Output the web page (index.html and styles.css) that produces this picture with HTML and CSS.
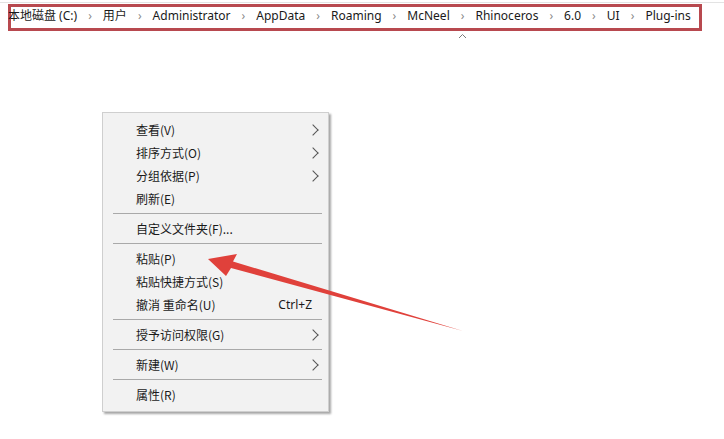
FILE: index.html
```html
<!DOCTYPE html>
<html lang="zh-CN">
<head>
    <meta charset="UTF-8">
    <title>Plug-ins</title>
    <link rel="stylesheet" href="styles.css">
</head>
<body>
<div class="window">
    <div class="address-bar">
        <div class="crumbs">
            <span class="crumb first">本地磁盘 (C:)</span><span class="sep">›</span>
            <span class="crumb">用户</span><span class="sep">›</span>
            <span class="crumb">Administrator</span><span class="sep">›</span>
            <span class="crumb">AppData</span><span class="sep">›</span>
            <span class="crumb">Roaming</span><span class="sep">›</span>
            <span class="crumb">McNeel</span><span class="sep">›</span>
            <span class="crumb">Rhinoceros</span><span class="sep">›</span>
            <span class="crumb">6.0</span><span class="sep">›</span>
            <span class="crumb">UI</span><span class="sep">›</span>
            <span class="crumb">Plug-ins</span>
        </div>
    </div>
    <div class="sort-caret">
        <svg width="9" height="6" viewBox="0 0 9 6"><path d="M1 5 L4.5 1.5 L8 5" fill="none" stroke="#7a7a7a" stroke-width="1"/></svg>
    </div>

    <ul class="context-menu">
        <li class="item has-sub">查看(V)</li>
        <li class="item has-sub">排序方式(O)</li>
        <li class="item has-sub">分组依据(P)</li>
        <li class="item">刷新(E)</li>
        <li class="divider"></li>
        <li class="item">自定义文件夹(F)...</li>
        <li class="divider"></li>
        <li class="item">粘贴(P)</li>
        <li class="item">粘贴快捷方式(S)</li>
        <li class="item">撤消 重命名(U)<span class="shortcut">Ctrl+Z</span></li>
        <li class="divider"></li>
        <li class="item has-sub">授予访问权限(G)</li>
        <li class="divider"></li>
        <li class="item has-sub">新建(W)</li>
        <li class="divider"></li>
        <li class="item">属性(R)</li>
    </ul>

    <svg class="pointer" width="724" height="439" viewBox="0 0 724 439">
        <polygon fill="#e0413b" points="208,259 237,254 233,261.5 463,331 231,268 226,276"/>
    </svg>
</div>
</body>
</html>
```

FILE: styles.css
```css
body {
    margin: 0;
    background: #fff;
    font-family: "Noto Sans", "Noto Sans CJK SC", sans-serif;
    font-size: 12px;
    color: #1a1a1a;
}
.window {
    position: relative;
    width: 724px;
    height: 439px;
    overflow: hidden;
}
.address-bar {
    border-top: 1px solid #e3e3e3;
    margin-top: 2px;
    padding-top: 1px;
}
.crumbs {
    display: flex;
    align-items: flex-start;
    width: 688px;
    height: 17px;
    margin-left: 8px;
    padding-bottom: 4px;
    border: 3px solid #b8494f;
    white-space: nowrap;
}
.crumb {
    line-height: 17px;
}
.crumb.first {
    margin-left: -3px;
}
.sep {
    color: #8a8a8a;
    line-height: 17px;
    padding: 0 11px;
}
.sort-caret {
    display: flex;
    justify-content: center;
    margin-left: 458px;
    width: 9px;
    margin-top: 2px;
}
.context-menu {
    position: absolute;
    left: 102px;
    top: 112px;
    width: 225px;
    margin: 0;
    padding: 5px 0;
    list-style: none;
    background: #f2f2f2;
    border: 1px solid #cfcfcf;
    box-shadow: 2px 2px 2px rgba(0, 0, 0, 0.35);
    font-family: "Noto Sans CJK SC", sans-serif;
}
.item {
    position: relative;
    display: flex;
    justify-content: space-between;
    height: 23px;
    line-height: 23px;
    padding: 0 16px 0 33px;
}
.shortcut {
    font-family: "Noto Sans", sans-serif;
}
.has-sub::after {
    content: "";
    position: absolute;
    right: 11px;
    top: 8px;
    width: 7px;
    height: 7px;
    border-top: 1px solid #555;
    border-right: 1px solid #555;
    transform: rotate(45deg);
}
.divider {
    height: 1px;
    margin: 3px 6px 3px 10px;
    background: #a9a9a9;
}
.pointer {
    position: absolute;
    left: 0;
    top: 0;
}
```
